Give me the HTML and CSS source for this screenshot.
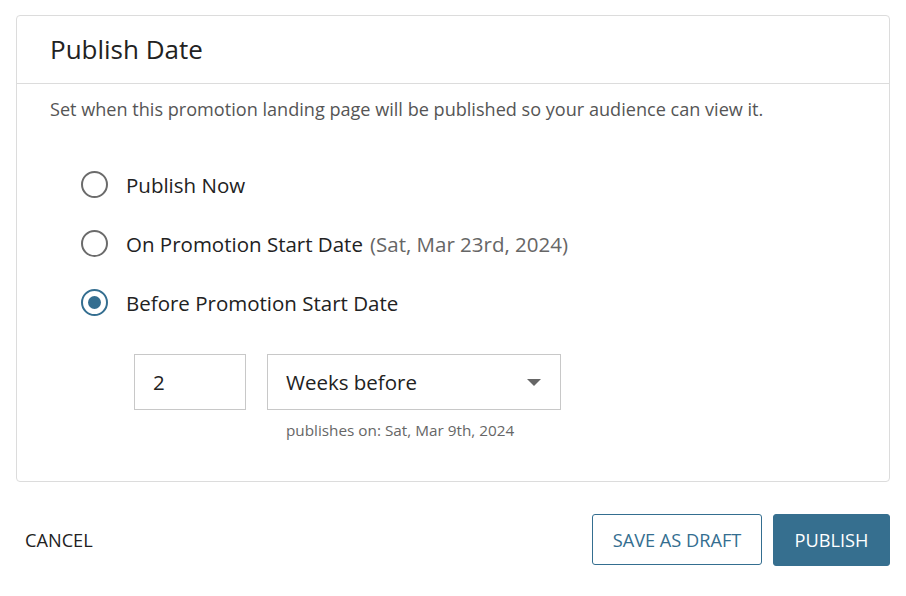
FILE: index.html
```html
<!DOCTYPE html>
<html>
<head>
    <title>Publish Date</title>
    <link rel="stylesheet" href="styles.css">
</head>
<body>
<div class="card">
    <div class="card-head">Publish Date</div>
    <div class="card-body">
        <p class="intro">Set when this promotion landing page will be published so your audience can view it.</p>

        <label class="opt">
            <span class="radio"></span>
            Publish Now
        </label>
        <label class="opt">
            <span class="radio"></span>
            On Promotion Start Date <span class="muted">(Sat, Mar 23rd, 2024)</span>
        </label>
        <label class="opt">
            <span class="radio on"></span>
            Before Promotion Start Date
        </label>

        <div class="when">
            <div class="num">2</div>
            <div class="pick">
                <div class="select">
                    Weeks before
                    <span class="caret"></span>
                </div>
                <div class="hint">publishes on: Sat, Mar 9th, 2024</div>
            </div>
        </div>
    </div>
</div>

<div class="actions">
    <button type="button" class="link">CANCEL</button>
    <div class="right">
        <button type="button" class="outline">SAVE AS DRAFT</button>
        <button type="button" class="solid">PUBLISH</button>
    </div>
</div>
</body>
</html>
```

FILE: styles.css
```css
body {
    margin: 0;
    padding: 15px 16px 0 16px;
    font-family: "Open Sans", "Liberation Sans", sans-serif;
    color: #222;
    background: #fff;
}

.card {
    border: 1px solid #dcdcdc;
    border-radius: 4px;
}

.card-head {
    height: 67px;
    line-height: 67px;
    padding: 0 33px;
    font-size: 26px;
    border-bottom: 1px solid #dcdcdc;
}

.card-body {
    padding: 13px 33px 41px 33px;
}

.intro {
    margin: 0 0 34px 0;
    font-size: 18.1px;
    line-height: 24px;
    color: #555;
}

.opt {
    display: flex;
    align-items: center;
    gap: 18px;
    height: 59px;
    padding-left: 31px;
    font-size: 20.5px;
}

.muted {
    color: #666;
    margin-left: -11px;
}

.radio {
    width: 23px;
    height: 23px;
    border: 2.5px solid #6b6b6b;
    border-radius: 50%;
    flex: none;
    position: relative;
}

.radio.on {
    border-color: #346e90;
}

.radio.on::after {
    content: "";
    position: absolute;
    left: 5px;
    top: 5px;
    width: 13px;
    height: 13px;
    border-radius: 50%;
    background: #346e90;
}

.when {
    display: flex;
    gap: 21px;
    margin-top: 22px;
    padding-left: 84px;
}

.num {
    width: 92px;
    height: 54px;
    line-height: 54px;
    padding-left: 18px;
    border: 1px solid #c8c8c8;
    font-size: 20.5px;
}

.select {
    width: 274px;
    height: 54px;
    line-height: 54px;
    padding-left: 18px;
    border: 1px solid #c8c8c8;
    font-size: 20.5px;
    position: relative;
}

.caret {
    position: absolute;
    right: 19px;
    top: 24px;
    border-left: 7px solid transparent;
    border-right: 7px solid transparent;
    border-top: 7px solid #666;
}

.hint {
    margin-top: 10px;
    padding-left: 19px;
    font-size: 15.3px;
    color: #666;
}

.actions {
    display: flex;
    justify-content: space-between;
    align-items: center;
    margin-top: 32px;
}

button {
    font-family: inherit;
    font-size: 18.2px;
    cursor: pointer;
}

.link {
    border: none;
    background: none;
    color: #222;
    padding: 0 9px;
}

.right {
    display: flex;
    gap: 11px;
}

.outline {
    width: 170px;
    height: 51px;
    border: 1px solid #346e90;
    border-radius: 3px;
    background: #fff;
    color: #346e90;
}

.solid {
    width: 117px;
    height: 52px;
    border: 1px solid #366f8f;
    border-radius: 3px;
    background: #366f8f;
    color: #fff;
}
```
